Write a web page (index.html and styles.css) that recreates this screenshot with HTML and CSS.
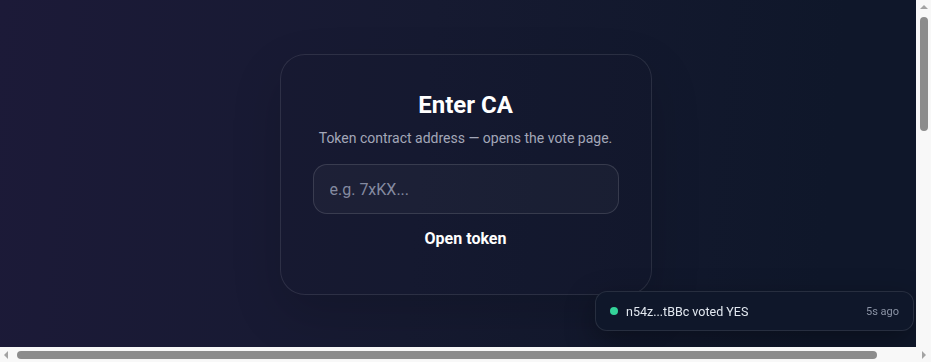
FILE: index.html
```html
<!DOCTYPE html>
<html>
<head>
  <title>Enter CA</title>
  <link rel="stylesheet" href="styles.css">
</head>
<body>
  <div class="page">
    <section class="hero">
      <form class="card">
        <h1 class="title">Enter CA</h1>
        <p class="subtitle">Token contract address — opens the vote page.</p>
        <input class="ca-input" type="text" placeholder="e.g. 7xKX...">
        <button class="open-btn" type="submit">Open token</button>
      </form>
    </section>
  </div>

  <div class="toast">
    <span class="dot"></span>
    <span class="toast-text">n54z...tBBc voted YES</span>
    <span class="toast-time">5s ago</span>
  </div>

  <div class="scroll-v">
    <span class="arrow arrow-up"></span>
    <span class="thumb-v"></span>
  </div>
  <div class="scroll-h">
    <span class="arrow arrow-left"></span>
    <span class="thumb-h"></span>
    <span class="arrow arrow-right"></span>
  </div>
</body>
</html>
```

FILE: styles.css
```css
* {
  box-sizing: border-box;
  margin: 0;
  padding: 0;
}

body {
  font-family: Roboto, "Noto Sans", Arial, sans-serif;
  background: #0f172a;
  color: #fff;
  overflow: hidden;
}

.page {
  width: 100vw;
  min-height: 100vh;
  background: linear-gradient(95deg, #1c1a38 0%, #161a31 45%, #0f172a 88%);
}

.hero {
  display: flex;
  justify-content: center;
  padding-top: 54px;
}

.card {
  width: 372px;
  padding: 34px 32px 44px;
  border: 1px solid rgba(255, 255, 255, 0.1);
  border-radius: 25px;
  background: rgba(15, 23, 42, 0.1);
  box-shadow: 0 20px 50px rgba(0, 0, 0, 0.15);
  display: flex;
  flex-direction: column;
  align-items: center;
}

.title {
  font-size: 24px;
  font-weight: 700;
  line-height: 32px;
}

.subtitle {
  margin-top: 7px;
  font-size: 14px;
  line-height: 20px;
  color: #a3a7b8;
}

.ca-input {
  margin-top: 16px;
  width: 100%;
  height: 50px;
  padding: 0 16px;
  border: 1px solid rgba(255, 255, 255, 0.13);
  border-radius: 14px;
  background: rgba(255, 255, 255, 0.03);
  font-family: inherit;
  font-size: 16px;
  color: #fff;
  outline: none;
}

.ca-input::placeholder {
  color: #848aa0;
}

.open-btn {
  margin-top: 14px;
  border: none;
  background: none;
  font-family: inherit;
  font-size: 16px;
  font-weight: 700;
  line-height: 22px;
  color: #fff;
  cursor: pointer;
}

.toast {
  position: fixed;
  right: 17px;
  bottom: 31px;
  width: 319px;
  height: 40px;
  padding: 0 14px;
  display: flex;
  align-items: center;
  border: 1px solid rgba(255, 255, 255, 0.1);
  border-radius: 12px;
  background: #0f172a;
  box-shadow: 0 10px 30px rgba(0, 0, 0, 0.35);
}

.dot {
  width: 8px;
  height: 8px;
  border-radius: 50%;
  background: #34d399;
}

.toast-text {
  margin-left: 8px;
  font-size: 12.5px;
  color: #e2e8f0;
}

.toast-time {
  margin-left: auto;
  font-size: 11px;
  color: #8b93a5;
}

/* browser scrollbars as seen in the capture */
.scroll-v {
  position: fixed;
  top: 0;
  right: 0;
  width: 15px;
  height: 347px;
  background: #f8f8f8;
  display: flex;
  flex-direction: column;
  align-items: center;
}

.scroll-h {
  position: fixed;
  left: 0;
  bottom: 0;
  width: 100%;
  height: 15px;
  background: #f8f8f8;
  display: flex;
  align-items: center;
  padding: 0 4px;
}

.thumb-v {
  margin-top: 8px;
  width: 8px;
  height: 114px;
  border-radius: 4px;
  background: #8c8c8c;
}

.thumb-h {
  margin-left: 9px;
  width: 860px;
  height: 8px;
  border-radius: 4px;
  background: #8c8c8c;
}

.arrow {
  width: 0;
  height: 0;
}

.arrow-up {
  margin-top: 5px;
  border-left: 4px solid transparent;
  border-right: 4px solid transparent;
  border-bottom: 4px solid #a3a3a3;
}

.arrow-left {
  border-top: 4px solid transparent;
  border-bottom: 4px solid transparent;
  border-right: 4px solid #a3a3a3;
}

.arrow-right {
  margin-left: auto;
  margin-right: 1px;
  border-top: 4px solid transparent;
  border-bottom: 4px solid transparent;
  border-left: 4px solid #a3a3a3;
}
```
